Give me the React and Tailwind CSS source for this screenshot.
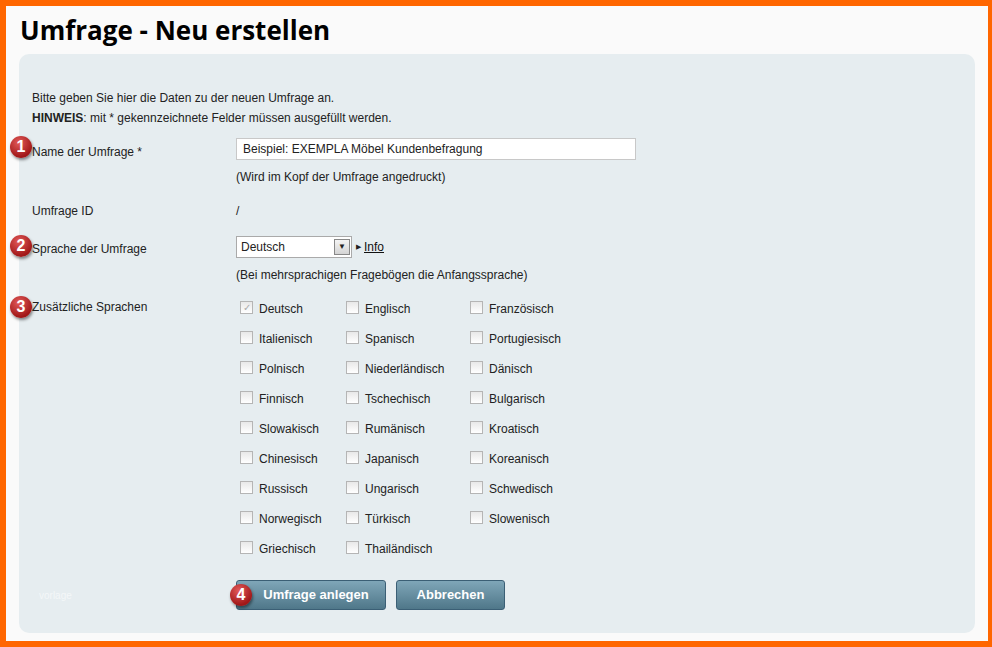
import React from "react";

const langs = [
  ["Deutsch","Englisch","Französisch"],
  ["Italienisch","Spanisch","Portugiesisch"],
  ["Polnisch","Niederländisch","Dänisch"],
  ["Finnisch","Tschechisch","Bulgarisch"],
  ["Slowakisch","Rumänisch","Kroatisch"],
  ["Chinesisch","Japanisch","Koreanisch"],
  ["Russisch","Ungarisch","Schwedisch"],
  ["Norwegisch","Türkisch","Slowenisch"],
  ["Griechisch","Thailändisch",null],
];

function Badge({ n, cls = "" }) {
  return (
    <span className={"absolute flex items-center justify-center w-[22px] h-[22px] rounded-full text-white font-bold text-[16px] shadow-[1px_2px_3px_rgba(0,0,0,0.45)] bg-[radial-gradient(circle_at_40%_30%,#e35a5a,#a11818_70%)] " + cls}>{n}</span>
  );
}

function Box({ checked }) {
  return (
    <span className="inline-flex items-center justify-center w-[13px] h-[13px] border border-[#b5b5b5] bg-[linear-gradient(#e8e8e8,#ffffff)] text-[10px] text-[#aaa] leading-none">{checked ? "✓" : ""}</span>
  );
}

export default function App() {
  return (
    <div className="w-[992px] h-[647px] bg-[#ff6600] pt-[6px] pl-[6px] pr-[4px] pb-[6px]" style={{ fontFamily: "'Liberation Sans', Arial, sans-serif" }}>
      <div className="h-full bg-[#fafafa] px-[13px] flex flex-col">
        <h1 className="h-[48px] flex items-center pl-[1px] text-[26px] font-bold text-black" style={{ fontFamily: "'Open Sans', sans-serif" }}>Umfrage - Neu erstellen</h1>
        <div className="flex-1 mb-[8px] rounded-[10px] bg-[#e6edf0] pt-[34px] pl-[13px] text-[12px] text-[#222] relative">
          <p className="leading-[20px]">Bitte geben Sie hier die Daten zu der neuen Umfrage an.</p>
          <p className="leading-[20px]"><b>HINWEIS</b>: mit * gekennzeichnete Felder müssen ausgefüllt werden.</p>

          <div className="relative flex mt-[10px]">
            <Badge n="1" cls="-left-[22px] -top-[2px]" />
            <div className="w-[204px] pt-[5px]">Name der Umfrage *</div>
            <div>
              <div className="w-[400px] h-[22px] border border-[#c8c8c8] bg-white flex items-center pl-[6px] text-[12px]">Beispiel: EXEMPLA Möbel Kundenbefragung</div>
              <div className="mt-[8px]">(Wird im Kopf der Umfrage angedruckt)</div>
            </div>
          </div>

          <div className="flex mt-[16px]">
            <div className="w-[204px]">Umfrage ID</div>
            <div>/</div>
          </div>

          <div className="relative flex mt-[16px]">
            <Badge n="2" cls="-left-[22px] -top-[1px]" />
            <div className="w-[204px] pt-[4px]">Sprache der Umfrage</div>
            <div>
              <div className="flex items-center">
                <div className="w-[116px] h-[22px] border border-[#aaa] bg-white flex items-center justify-between pl-[4px] pr-[1px]">
                  <span>Deutsch</span>
                  <span className="w-[16px] h-[16px] border border-[#888] bg-[linear-gradient(#f4f4f4,#d4d4d4)] flex items-center justify-center text-[8px]">▼</span>
                </div>
                <span className="ml-[4px] text-[7px]">▶</span>
                <a className="ml-[3px] underline text-[#111]">Info</a>
              </div>
              <div className="mt-[8px]">(Bei mehrsprachigen Fragebögen die Anfangssprache)</div>
            </div>
          </div>

          <div className="relative flex mt-[14px]">
            <Badge n="3" cls="-left-[22px] -top-[2px]" />
            <div className="w-[208px]">Zusätzliche Sprachen</div>
            <div className="grid grid-cols-[106px_124px_120px] mt-[3px]">
              {langs.flat().map((l, i) => (
                <div key={i} className="h-[30px] flex items-start">
                  {l && <><Box checked={i === 0} /><span className={"ml-[6px] -mt-[1px] text-[12px] " + (i === 0 ? "text-[#222]" : "")}>{l}</span></>}
                </div>
              ))}
            </div>
          </div>

          <div className="flex items-center mt-[9px]">
            <span className="w-[204px] text-[10px] text-[#f4f7f8] pl-[7px]">vorlage</span>
            <div className="relative">
              <Badge n="4" cls="-left-[6px] top-[4px]" />
              <button className="w-[150px] h-[30px] rounded-[3px] border border-[#3b5f75] bg-[linear-gradient(#7fa6b8,#4f7789)] text-white font-bold text-[13px] pl-[10px]">Umfrage anlegen</button>
            </div>
            <button className="ml-[10px] w-[109px] h-[30px] rounded-[3px] border border-[#3b5f75] bg-[linear-gradient(#7fa6b8,#4f7789)] text-white font-bold text-[13px]">Abbrechen</button>
          </div>
        </div>
      </div>
    </div>
  );
}
